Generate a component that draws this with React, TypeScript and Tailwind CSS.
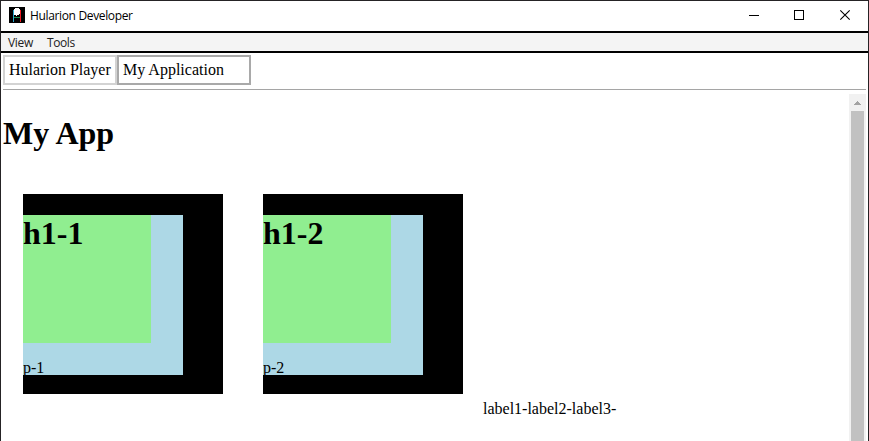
import React from "react";

function AppIcon() {
  return (
    <svg width="16" height="16" viewBox="0 0 16 16" shapeRendering="crispEdges" className="block">
      <path fill="#000000" d="M0 0h16v16H0z" />
      <path fill="#27a9d0" d="M4 3h1v12H4z" />
      <path fill="#f01820" d="M11 3h1v12h-1z" />
      <path fill="#189050" d="M5 10h6v1H5z" />
      <path fill="#ffffff" d="M6 1h4v1h1v5h-1v1H8v1H7V8H5V2h1z" />
    </svg>
  );
}

function WindowControls() {
  return (
    <svg width="138" height="30" viewBox="0 0 138 30" fill="none" stroke="#000000" className="block">
      <path d="M19 14.5h10" shapeRendering="crispEdges" />
      <path d="M64.5 9.5h9v9h-9z" shapeRendering="crispEdges" />
      <path d="M110.3 9.3l9.4 9.4M119.7 9.3l-9.4 9.4" strokeWidth="1.1" />
    </svg>
  );
}

function Box({ title, text }: { title: string; text: string }) {
  return (
    <div className="h-[200px] w-[200px] bg-black pt-[21px]">
      <div className="h-[160px] w-[160px] overflow-hidden bg-[#add8e6]">
        <div className="h-[128px] w-[128px] bg-[#90ee90]">
          <h1 className="text-[32px] leading-[37px] font-bold">{title}</h1>
        </div>
        <p className="mt-4 text-[16px] leading-[18px]">{text}</p>
      </div>
    </div>
  );
}

export default function App() {
  return (
    <div className="flex h-[441px] w-[869px] flex-col overflow-hidden border-x border-t border-[#252325] bg-white font-['Liberation_Serif',serif] text-black">
      <header className="flex h-[30px] shrink-0 items-start justify-between font-['Open_Sans',sans-serif] text-[12px]">
        <div className="flex pl-2 pt-[6px]">
          <AppIcon />
          <span className="ml-[5px] leading-[17px] whitespace-nowrap tracking-[-0.35px]">Hularion Developer</span>
        </div>
        <WindowControls />
      </header>
      <nav className="flex h-[22px] shrink-0 border-y-2 border-black bg-[#f4f4f4] pl-[7px] font-['Open_Sans',sans-serif] text-[12px] leading-[19px] text-[#212121]">
        <span className="w-[39px] tracking-[-0.3px]">View</span>
        <span className="tracking-[-0.4px]">Tools</span>
      </nav>
      <div className="mx-[2px] mt-[2px] flex h-[35px] shrink-0 border-b border-[#a5a5a5] text-[16px] leading-[26px]">
        <div className="h-[30px] w-[114px] border-2 border-[#d3d3d3] pl-1 whitespace-nowrap">Hularion Player</div>
        <div className="h-[30px] w-[134px] border-2 border-[#a9a9a9] pl-1 whitespace-nowrap">My Application</div>
      </div>
      <div className="mt-1 mr-[2px] ml-[2px] flex min-h-0 flex-1">
        <main className="min-w-0 flex-1">
          <h1 className="mt-[21px] text-[32px] leading-[37px] font-bold">My App</h1>
          <div className="mt-[42px] ml-5 flex gap-10">
            <Box title="h1-1" text="p-1" />
            <Box title="h1-2" text="p-2" />
            <div className="-ml-5 pt-[206px] text-[16px] leading-[18px]">label1-label2-label3-</div>
          </div>
        </main>
        <div className="flex w-[17px] shrink-0 flex-col bg-[#f1f1f1]">
          <svg width="17" height="17" viewBox="0 0 17 17" className="block shrink-0" shapeRendering="crispEdges">
            <path fill="#a3a3a3" d="M8 7h1v1h1v1h1v1h1v1H5v-1h1V9h1V8h1z" />
          </svg>
          <div className="mx-[2px] flex-1 bg-[#c1c1c1]" />
        </div>
      </div>
    </div>
  );
}
